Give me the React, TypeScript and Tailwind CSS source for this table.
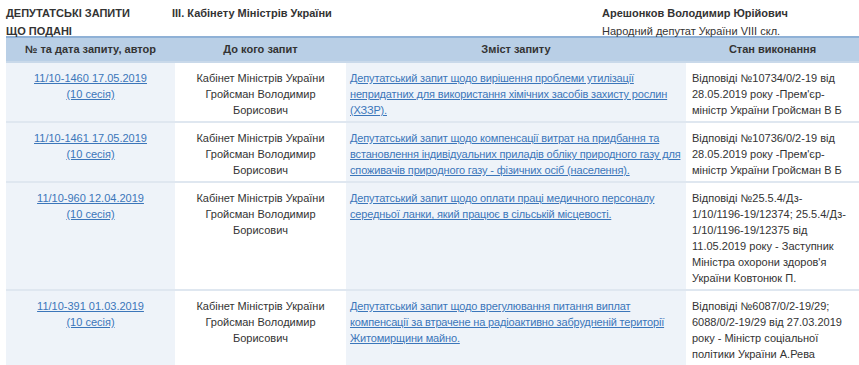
const ROWS = [
  {
    num: "11/10-1460 17.05.2019",
    to: "Кабінет Міністрів України Гройсман Володимир Борисович",
    text: "Депутатський запит щодо вирішення проблеми утилізації непридатних для використання хімічних засобів захисту рослин (ХЗЗР).",
    state: "Відповіді №10734/0/2-19 від 28.05.2019 року -Прем'єр-міністр України Гройсман В Б",
  },
  {
    num: "11/10-1461 17.05.2019",
    to: "Кабінет Міністрів України Гройсман Володимир Борисович",
    text: "Депутатський запит щодо компенсації витрат на придбання та встановлення індивідуальних приладів обліку природного газу для споживачів природного газу - фізичних осіб (населення).",
    state: "Відповіді №10736/0/2-19 від 28.05.2019 року -Прем'єр-міністр України Гройсман В Б",
  },
  {
    num: "11/10-960 12.04.2019",
    to: "Кабінет Міністрів України Гройсман Володимир Борисович",
    text: "Депутатський запит щодо оплати праці медичного персоналу середньої ланки, який працює в сільській місцевості.",
    state: "Відповіді №25.5.4/Дз-1/10/1196-19/12374; 25.5.4/Дз-1/10/1196-19/12375 від 11.05.2019 року - Заступник Міністра охорони здоров'я України Ковтонюк П.",
  },
  {
    num: "11/10-391 01.03.2019",
    to: "Кабінет Міністрів України Гройсман Володимир Борисович",
    text: "Депутатський запит щодо врегулювання питання виплат компенсації за втрачене на радіоактивно забрудненій території Житомирщини майно.",
    state: "Відповіді №6087/0/2-19/29; 6088/0/2-19/29 від 27.03.2019 року - Міністр соціальної політики України А.Рева",
  },
];

// wrap like the original page: never after a slash, but after "Дз-"
const wrapLikePage = (s: string) =>
  s.split("/").join("/\u2060").split("Дз-").join("Дз-\u200b");

export default function App() {
  return (
    <div className="w-[859px] h-[365px] overflow-hidden bg-white text-[11px] text-[#333] [font-family:'Liberation_Sans',Arial,sans-serif]">
      <div className="flex h-[36px] pl-[6px] pt-[5px] leading-[17.5px]">
        <div className="w-[166px] font-bold">
          ДЕПУТАТСЬКІ ЗАПИТИ
          <br />
          ЩО ПОДАНІ
        </div>
        <div className="w-[430px] font-bold">ІІІ. Кабінету Міністрів України</div>
        <div>
          <div className="font-bold">Арешонков Володимир Юрійович</div>
          <div>Народний депутат України VIII скл.</div>
        </div>
      </div>

      <table className="ml-[6px] w-[853px] table-fixed border-collapse">
        <colgroup>
          <col className="w-[169px]" />
          <col className="w-[171px]" />
          <col className="w-[340px]" />
          <col className="w-[173px]" />
        </colgroup>
        <thead>
          <tr className="h-[25px] border-t-2 border-b-2 border-t-[#8fb1d6] border-b-[#c9d9ea] bg-[#b9cfe6] font-bold">
            <th className="text-center">№ та дата запиту, автор</th>
            <th className="text-center">До кого запит</th>
            <th className="text-center">Зміст запиту</th>
            <th className="text-center">Стан виконання</th>
          </tr>
        </thead>
        <tbody className="leading-4">
          {ROWS.map((r) => (
            <tr key={r.num} className="border-b-2 border-[#dfe7f0] align-top">
              <td className="bg-[#eef3f9] px-[4px] pt-[7px] pb-[3px] text-center">
                <a href="#" className="text-[#3b76ba] underline">
                  {r.num}
                  <br />
                  (10 сесія)
                </a>
              </td>
              <td className="bg-white px-[14px] pt-[7px] pb-[3px] text-center">{r.to}</td>
              <td className="bg-[#eef3f9] pl-[4px] pr-0 pt-[7px] pb-[3px] tracking-[-0.16px]">
                <a href="#" className="text-[#3b76ba] underline">
                  {r.text}
                </a>
              </td>
              <td className="bg-white pl-[6px] pr-[8px] pt-[7px] pb-[3px]">{wrapLikePage(r.state)}</td>
            </tr>
          ))}
        </tbody>
      </table>
    </div>
  );
}
